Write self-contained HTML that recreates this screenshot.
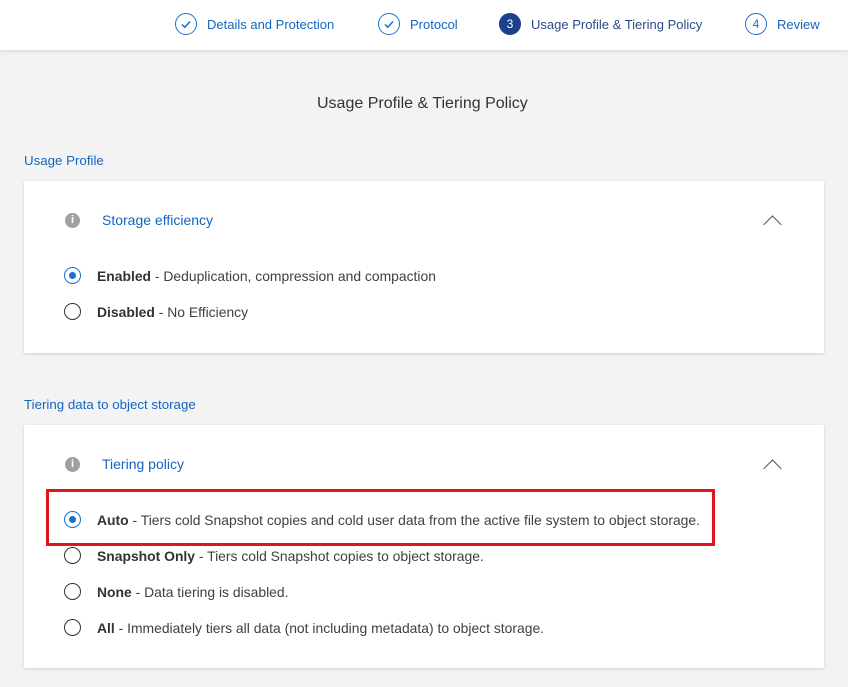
<!DOCTYPE html>
<html><head><style>
*{margin:0;padding:0;box-sizing:border-box}
body{width:848px;height:687px;background:#f3f3f3;font-family:"Liberation Sans",sans-serif;font-size:13px;color:#404040;position:relative;overflow:hidden}
.hdr{position:absolute;left:0;top:0;width:848px;height:50px;background:#fff;box-shadow:0 1px 4px rgba(0,0,0,.12)}
.step{position:absolute;top:12px;height:24px;display:flex;align-items:center;color:#1565c0;font-size:13px}
.c{width:22px;height:22px;border:1.5px solid #1a6fd0;border-radius:50%;display:flex;align-items:center;justify-content:center;margin-right:10px;font-size:12px;color:#1a6fd0}
.c.f{background:#1d3f8c;border-color:#1d3f8c;color:#fff}
.abs{position:absolute}
.t{color:#333;font-size:16px}
.sec{color:#1565c0;font-size:13.3px}
.card{position:absolute;left:24px;width:800px;background:#fff;box-shadow:0 1px 3px rgba(0,0,0,.15)}
.info{position:absolute;width:15px;height:15px;border-radius:50%;background:#a0a0a0;color:#fff;font-size:11px;font-weight:bold;text-align:center;line-height:15px}
.ct{position:absolute;color:#1565c0;font-size:14px}
.chev{position:absolute;width:13px;height:13px;border-left:1.5px solid #555;border-top:1.5px solid #555;transform:rotate(45deg)}
.r{position:absolute;display:flex;align-items:center;font-size:13.9px;color:#404040;white-space:nowrap}
.rb{width:17px;height:17px;border:1.5px solid #333;border-radius:50%;margin-right:16px;position:relative;flex:none}
.rb.on{border-color:#1a6fd0}
.rb.on::after{content:"";position:absolute;left:3.5px;top:3.5px;width:7px;height:7px;border-radius:50%;background:#1a6fd0}
b{color:#333}
</style></head><body>
<div class="hdr">
<div class="step" style="left:175px"><div class="c"><svg width="12" height="12" viewBox="0 0 12 12"><path d="M2 6.5l2.8 2.8L10 3.5" fill="none" stroke="#1a6fd0" stroke-width="1.5"/></svg></div>Details and Protection</div>
<div class="step" style="left:378px"><div class="c"><svg width="12" height="12" viewBox="0 0 12 12"><path d="M2 6.5l2.8 2.8L10 3.5" fill="none" stroke="#1a6fd0" stroke-width="1.5"/></svg></div>Protocol</div>
<div class="step" style="left:499px;color:#2c4a86"><div class="c f">3</div>Usage Profile &amp; Tiering Policy</div>
<div class="step" style="left:745px"><div class="c">4</div>Review</div>
</div>
<div class="abs t" style="left:317px;top:95px">Usage Profile &amp; Tiering Policy</div>
<div class="abs sec" style="left:24px;top:153px">Usage Profile</div>
<div class="card" style="top:181px;height:172px">
<div class="info" style="left:41px;top:32px">i</div>
<div class="ct" style="left:78px;top:31px">Storage efficiency</div>
<div class="chev" style="left:742px;top:37px"></div>
<div class="r" style="left:40px;top:86px"><div class="rb on"></div><b>Enabled</b>&nbsp;- Deduplication, compression and compaction</div>
<div class="r" style="left:40px;top:122px"><div class="rb"></div><b>Disabled</b>&nbsp;- No Efficiency</div>
</div>
<div class="abs sec" style="left:24px;top:397px">Tiering data to object storage</div>
<div class="card" style="top:425px;height:243px">
<div class="info" style="left:41px;top:32px">i</div>
<div class="ct" style="left:78px;top:31px">Tiering policy</div>
<div class="chev" style="left:742px;top:37px"></div>
<div class="r" style="left:40px;top:86px"><div class="rb on"></div><b>Auto</b>&nbsp;- Tiers cold Snapshot copies and cold user data from the active file system to object storage.</div>
<div class="r" style="left:40px;top:122px"><div class="rb"></div><b>Snapshot Only</b>&nbsp;- Tiers cold Snapshot copies to object storage.</div>
<div class="r" style="left:40px;top:158px"><div class="rb"></div><b>None</b>&nbsp;- Data tiering is disabled.</div>
<div class="r" style="left:40px;top:194px"><div class="rb"></div><b>All</b>&nbsp;- Immediately tiers all data (not including metadata) to object storage.</div>
</div>
<div class="abs" style="left:46px;top:489px;width:669px;height:57px;border:3px solid #e0141e"></div>
</body></html>
